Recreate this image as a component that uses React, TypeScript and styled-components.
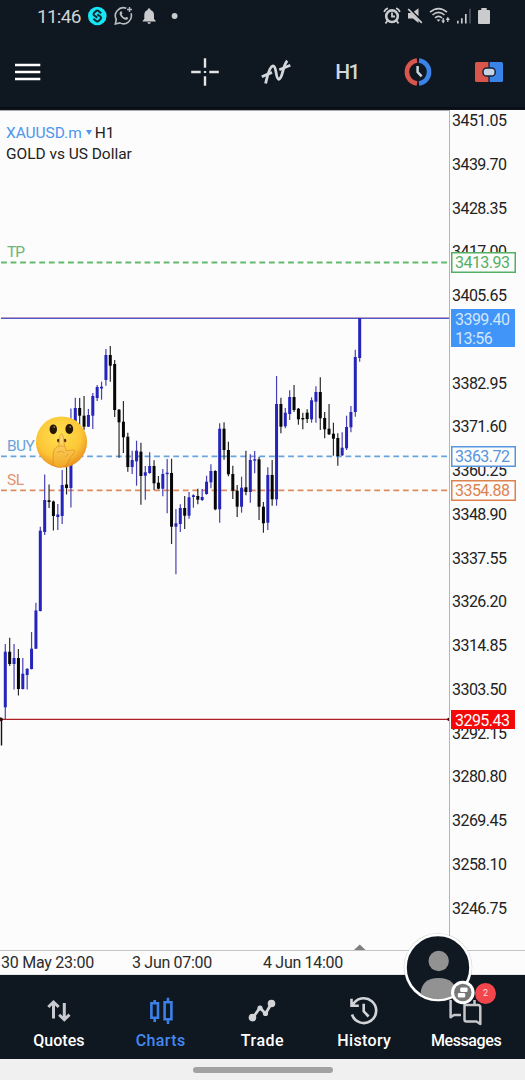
import React from "react";
import styled, { createGlobalStyle } from "styled-components";

const GlobalStyle = createGlobalStyle`
  * { box-sizing: border-box; }
  body { margin: 0; background: #0f1720; font-family: Roboto, sans-serif; }
`;

const Screen = styled.div`
  width: 525px;
  height: 1080px;
  display: flex;
  flex-direction: column;
  overflow: hidden;
  background: #0f1720;
`;

const StatusBar = styled.div`
  height: 34px;
  display: flex;
  justify-content: space-between;
  padding: 0 35px 0 37px;
`;

const StatusGroup = styled.div<{ $gap: number }>`
  display: flex;
  align-items: center;
  gap: ${(p) => p.$gap}px;
  height: 32px;
  svg { display: block; }
`;

const Time = styled.span`
  width: 44px;
  color: #d0d2d4;
  font-size: 19px;
  letter-spacing: -0.75px;
  white-space: nowrap;
`;

const Toolbar = styled.div`
  height: 76px;
  display: flex;
  align-items: center;
  border-bottom: 1px solid #0f1720;
  box-shadow: inset 0 -2px 0 #0a0f16;
`;

const MenuButton = styled.div`
  flex: 1;
  padding-left: 15px;
  svg { display: block; }
`;

const Tool = styled.div`
  width: 71px;
  height: 75px;
  display: flex;
  align-items: center;
  justify-content: center;
  padding-right: 1px;
  color: #d3d6da;
  font-size: 21px;
  font-weight: 500;
  letter-spacing: -1.6px;
`;

const ChartPanel = styled.div`
  position: relative;
  height: 865px;
  display: flex;
  flex-direction: column;
  background: #fcfcfc;
`;

const ChartBody = styled.div`
  height: 840px;
  display: flex;
`;

const Plot = styled.div`
  position: relative;
  width: 449px;
  > svg { display: block; }
`;

const PlotText = styled.div<{ $x: number; $y: number; $color: string; $size?: number; $spacing?: number }>`
  position: absolute;
  left: ${(p) => p.$x}px;
  top: ${(p) => p.$y}px;
  color: ${(p) => p.$color};
  font-size: ${(p) => p.$size ?? 15.5}px;
  letter-spacing: ${(p) => p.$spacing ?? 0}px;
  line-height: 20px;
  white-space: nowrap;
  span { color: #222; }
  svg { margin: 0 3px 3px 4px; }
`;

const PriceAxis = styled.div`
  position: relative;
  width: 76px;
  height: 840px;
  overflow: hidden;
  border-left: 1px solid #b5b5b5;
`;

const PriceList = styled.div`
  margin-top: -11px;
  display: flex;
  flex-direction: column;
`;

const Price = styled.div`
  height: 43.77px;
  line-height: 44px;
  padding-left: 2px;
  font-size: 16px;
  letter-spacing: -0.54px;
  color: #222;
`;

const PriceTag = styled.div<{ $top: number; $color: string; $fill?: string; $h?: number; $w?: number }>`
  position: absolute;
  left: 1px;
  top: ${(p) => p.$top}px;
  width: ${(p) => p.$w ?? 65}px;
  height: ${(p) => p.$h ?? 21}px;
  padding-left: 3px;
  border: 1.5px solid ${(p) => p.$fill ?? p.$color};
  background: ${(p) => p.$fill ?? "#fcfcfc"};
  color: ${(p) => p.$color};
  font-size: 16px;
  letter-spacing: -0.54px;
  line-height: 19px;
  box-shadow: inset 0 0 0 0.5px ${(p) => p.$fill ?? p.$color};
`;

const DateAxis = styled.div`
  height: 25px;
  display: flex;
  border-top: 1px solid #c4c4c4;
  border-bottom: 1px solid #e4e4e4;
  padding-left: 1px;
  line-height: 23px;
  font-size: 16px;
  color: #2b2b2b;
`;

const DateLabel = styled.span<{ $spacing: number }>`
  width: 131px;
  letter-spacing: ${(p) => p.$spacing}px;
  white-space: nowrap;
`;

const NavBar = styled.nav`
  position: relative;
  height: 84px;
  display: flex;
  padding: 0 8px;
`;

const NavItem = styled.div<{ $active?: boolean; $spacing?: number }>`
  flex: 1;
  display: flex;
  flex-direction: column;
  align-items: center;
  padding-top: 20px;
  color: ${(p) => (p.$active ? "#4289f0" : "#fff")};
  font-size: 16px;
  font-weight: 500;
  letter-spacing: ${(p) => p.$spacing ?? 0}px;
  line-height: 20px;
  svg { display: block; height: 32px; width: 40px; margin-bottom: 4px; }
`;

const Avatar = styled.div`
  position: absolute;
  left: 402px;
  top: -44px;
  svg { display: block; }
`;

const Badge = styled.div`
  position: absolute;
  left: 475px;
  top: 8px;
  width: 21px;
  height: 21px;
  border-radius: 50%;
  background: #f2464c;
  color: #ffdcdc;
  font-size: 9px;
  line-height: 21px;
  text-align: center;
`;

const HomeBar = styled.div`
  height: 21px;
  background: #f0f0f0;
  display: flex;
  justify-content: center;
  padding-top: 7.5px;
`;

const HomePill = styled.div`
  width: 140px;
  height: 6px;
  border-radius: 3px;
  background: #a2a2a2;
`;

const CHART_TOP = 110;
const STEP = 4.375;

// direction, high, body top, body bottom, low
type Candle = ["u" | "d", number, number, number, number];

const candles: Candle[] = [
  ["u", 644, 651.7, 707.3, 719], ["d", 637.7, 651.7, 664, 666], ["u", 644, 658, 664, 689.5],
  ["d", 649, 658, 689, 695.5], ["u", 658, 673.7, 689, 689.5], ["u", 668.5, 668.7, 675, 689.5],
  ["u", 632, 648.7, 669, 669.5], ["u", 602.7, 610.5, 648.7, 649], ["u", 526.7, 530.7, 611, 611.5],
  ["u", 474.5, 500, 532, 535], ["d", 484.5, 500.3, 502, 508], ["d", 500.5, 501.5, 516, 530.5],
  ["u", 504, 514.5, 517, 530], ["u", 470, 485, 516, 524], ["d", 455, 484.5, 488, 494.5],
  ["u", 408.5, 425, 488, 507.5], ["u", 397.7, 408, 430, 430], ["d", 398, 408, 415.7, 425],
  ["d", 396, 415.7, 426.7, 430], ["u", 409, 415, 426.7, 427], ["u", 393, 396, 415.7, 429],
  ["u", 385, 387, 398, 401], ["u", 381.7, 386.7, 388.5, 399.7], ["u", 349, 355, 380, 385.7],
  ["d", 346, 355, 365.7, 381.7], ["d", 360, 364, 410, 417], ["d", 409, 409.7, 422.3, 457.7],
  ["d", 401, 421.7, 437.3, 453], ["d", 432.7, 436.7, 467, 471.7], ["u", 450.7, 460, 467, 474],
  ["u", 440.7, 450.7, 461.3, 485.7], ["d", 442.7, 451.7, 476, 504.7], ["u", 466, 472.3, 475.7, 499.7],
  ["u", 452.3, 466, 473, 473.7], ["d", 460.3, 466, 483.3, 490], ["d", 476, 482.7, 488.7, 489.3],
  ["u", 469, 474, 488.7, 496.3], ["u", 459, 472.7, 474, 513.3], ["d", 458.7, 473, 526.7, 544],
  ["u", 509, 523.3, 526.7, 574.3], ["u", 504.3, 508, 524, 532], ["d", 496, 508, 515.7, 529],
  ["u", 492, 497.3, 515.7, 518.7], ["u", 494.3, 495.3, 497, 507.7], ["d", 488.7, 496, 499.7, 504.3],
  ["u", 489, 497, 500, 501], ["u", 475.7, 481.7, 494, 494.7], ["u", 464.3, 471, 482.3, 488.3],
  ["d", 470.3, 471, 509.3, 510.3], ["u", 423.3, 428.7, 509.3, 522.7], ["d", 422.3, 428.7, 450, 459.7],
  ["d", 441.7, 450, 474.3, 476.3], ["d", 465.7, 474, 490.7, 499], ["d", 485, 490.7, 506.7, 517],
  ["u", 476.7, 487.7, 506.7, 512.7], ["d", 450.7, 487.3, 492, 495.3], ["u", 454.3, 460, 492, 502.7],
  ["u", 451, 459.3, 460.7, 473.3], ["d", 456.7, 459.3, 506.7, 520], ["d", 502, 506.7, 523.3, 532.7],
  ["u", 467.3, 475, 522.7, 530], ["d", 460, 475, 499.3, 505.7], ["u", 376, 404, 499.3, 505.7],
  ["d", 397.7, 404, 426.7, 433.3], ["u", 408, 412.7, 426.3, 428.3], ["u", 390.3, 397, 414, 420],
  ["d", 385, 397, 410, 412], ["d", 408, 408.7, 419.3, 424.7], ["d", 412.7, 418, 419.3, 429.3],
  ["d", 409.3, 412.7, 419, 423], ["u", 397.3, 400.3, 419.3, 422.7], ["u", 386.3, 392, 401.7, 422.7],
  ["d", 377.3, 392, 418.3, 430], ["d", 412, 418, 429.3, 438.3], ["d", 404, 428.7, 434.3, 435],
  ["d", 422.7, 433.7, 438.7, 455.7], ["d", 433.3, 438, 456, 465.7], ["u", 432.3, 447.7, 455.3, 456],
  ["u", 415.7, 427, 448.3, 450], ["u", 406, 412, 427.3, 432.3], ["u", 349.7, 357, 412, 416.7],
  ["u", 318.3, 318.3, 358, 361.7],
];

const prices = [
  "3451.05", "3439.70", "3428.35", "3417.00", "3405.65", "", "3382.95", "3371.60", "3360.25", "3348.90",
  "3337.55", "3326.20", "3314.85", "3303.50", "3292.15", "3280.80", "3269.45", "3258.10", "3246.75",
];

const Level = ({ y, color }: { y: number; color: string }) => (
  <line x1="1" x2="449" y1={y} y2={y} stroke={color} strokeWidth="1.8" strokeDasharray="5.8 3.77" />
);

const ShushFace = () => (
  <g>
    <defs>
      <radialGradient id="face" cx="0.45" cy="0.35" r="0.68">
        <stop offset="0" stopColor="#ffe04f" />
        <stop offset="0.65" stopColor="#fcc636" />
        <stop offset="1" stopColor="#e8891d" />
      </radialGradient>
      <linearGradient id="hand" x1="0" y1="0" x2="0" y2="1">
        <stop offset="0" stopColor="#ffe07a" />
        <stop offset="1" stopColor="#f1aa25" />
      </linearGradient>
    </defs>
    <circle cx="61.5" cy="442" r="25.6" fill="url(#face)" />
    <ellipse cx="53.3" cy="429.3" rx="3.7" ry="4.9" fill="#261807" />
    <ellipse cx="69.3" cy="429" rx="3.9" ry="4.9" fill="#261807" />
    <circle cx="54.2" cy="427" r="1" fill="#8d6b45" />
    <circle cx="70.2" cy="427" r="1" fill="#8d6b45" />
    <ellipse cx="58.3" cy="440.6" rx="1.3" ry="1.8" fill="#5d2c0b" />
    <ellipse cx="65" cy="440.6" rx="1.3" ry="1.8" fill="#5d2c0b" />
    <path
      d="M60 436 Q61.5 431.5 63 436 L64.5 446 L66.5 451 L73 449.8 Q76 450.3 74 453 L70.5 457 L67 463.5 Q62 469 55.5 466.5 Q52.5 464 53.2 454 Q53.5 448 58.8 446 Z"
      fill="url(#hand)" stroke="#dc8c20" strokeWidth="0.7"
    />
    <path d="M59 447 Q61 445 64 446.5 M57 452.5 Q61 450 64.5 452.5 M65 457 L69 453.5" fill="none" stroke="#dd9628" strokeWidth="0.7" />
  </g>
);

const ChartDrawing = () => (
  <svg width="449" height="840" viewBox={`0 ${CHART_TOP} 449 840`}>
    <line x1="0" x2="449" y1="110.5" y2="110.5" stroke="#a9a9ad" />
    <Level y={262.5} color="#62b96c" />
    <Level y={456.3} color="#67a3dd" />
    <Level y={490.3} color="#de8a5c" />
    <line x1="1" x2="449" y1="317.7" y2="317.7" stroke="#d5a3b8" strokeWidth="1" />
    <line x1="1" x2="449" y1="318.4" y2="318.4" stroke="#4f58c4" strokeWidth="1.2" />
    {candles.map(([dir, high, top, bottom, low], i) => {
      const x = 5.3 + i * STEP;
      const up = dir === "u";
      return (
        <g key={i}>
          <line x1={x} x2={x} y1={high} y2={low} stroke={up ? "#4840b4" : "#2c2c2c"} strokeWidth="1.2" />
          <rect x={x - 1.5} y={top} width="3" height={Math.max(bottom - top, 1.4)} fill={up ? "#2524bb" : "#060606"} />
        </g>
      );
    })}
    <line x1="1.5" x2="1.5" y1="719" y2="745.5" stroke="#111" strokeWidth="1.4" />
    <line x1="0" x2="449" y1="719.4" y2="719.4" stroke="#ad2026" strokeWidth="1.3" />
    <circle cx="1" cy="719.3" r="1.9" fill="#3b0808" />
    <circle cx="448.8" cy="719.3" r="1.6" fill="#3b0808" />
    <path d="M354 950 L359.8 944.5 L365.5 950 Z" fill="#7e7e7e" />
    <ShushFace />
  </svg>
);

const StatusIcons = () => (
  <>
    <StatusGroup $gap={7}>
      <Time>11:46</Time>
      <svg width="19" height="20" viewBox="0 0 19 20">
        <circle cx="9.3" cy="10" r="9.3" fill="#17e6f4" />
        <path d="M13.2 7.2 L10 4.6 Q9.2 4.2 8.4 4.8 L6 7 Q5 8.4 6.3 9.5 L9.3 11.6 M5.4 12.8 L8.6 15.4 Q9.4 15.8 10.2 15.2 L12.6 13 Q13.6 11.6 12.3 10.5 L9.3 8.4" fill="none" stroke="#102b36" strokeWidth="2" />
      </svg>
      <svg width="19" height="20" viewBox="0 0 19 20">
        <path d="M12.3 2.3 A8 8 0 0 0 2.3 13.5 L1.3 18 L5.8 16.9 A8 8 0 0 0 17 7.3" fill="none" stroke="#b9bdc0" strokeWidth="1.6" />
        <path d="M6.2 5.8 Q7.6 4.5 8.3 6.8 Q8.5 8 7.6 8.5 Q8.9 11 11.2 11.8 Q12.1 10.4 13.3 11.2 Q15 12 13.8 13 Q11.5 15.1 8.2 12.1 Q4.3 8.2 6.2 5.8Z" fill="#b9bdc0" />
        <path d="M15.5 1 V6 M13 3.5 H18" stroke="#b9bdc0" strokeWidth="1.4" />
      </svg>
      <svg width="19" height="20" viewBox="0 0 19 20">
        <path d="M9 2.3 Q10.5 2.3 10.5 4 Q14 5.2 14 9 V13 L15.7 14.7 V15.5 H2.7 V14.7 L4.3 13 V9 Q4.3 5.2 7.6 4 Q7.6 2.3 9 2.3Z M7.3 16.2 H11 Q10.6 18 9.1 18 Q7.7 18 7.3 16.2Z" fill="#c9cbcd" />
      </svg>
      <svg width="19" height="20" viewBox="0 0 19 20"><circle cx="8.6" cy="10" r="2.9" fill="#c9cbcd" /></svg>
    </StatusGroup>
    <StatusGroup $gap={6}>
      <svg width="18" height="18" viewBox="0 0 18 18" fill="none" stroke="#c9cbcd">
        <circle cx="9" cy="9.2" r="5.8" strokeWidth="2.6" />
        <path d="M1.2 5 Q2 2 5 1.2 M13 1.2 Q16 2 16.8 5" strokeWidth="1.7" />
        <path d="M9 5.5 V9.5 H12 M4.5 13.5 L2.5 16.5 M13.5 13.5 L15.5 16.5" strokeWidth="1.8" />
      </svg>
      <svg width="16" height="18" viewBox="0 0 16 18">
        <path d="M1 6 H4.5 L11.5 13 V16 L6 11.5 H1Z M6.8 4.8 L11.5 1.3 V9.2Z" fill="#c9cbcd" />
        <path d="M1.2 2 L14.8 15.8" stroke="#c9cbcd" strokeWidth="1.7" />
      </svg>
      <svg width="22" height="18" viewBox="0 0 22 18" fill="none" stroke="#c9cbcd" strokeWidth="1.6">
        <path d="M1 5.2 Q9.5 -2 18 5.2 M3.5 8 Q9.5 2.8 15.5 8 M6 10.8 Q9.5 7.8 13 10.8" />
        <path d="M7.5 12.4 L9.5 14.8 L11.5 12.4Z" fill="#c9cbcd" stroke="none" />
        <path d="M12.2 13.5 H16.2 L14.2 16.6Z M16.7 13 H21 L18.8 9.8Z" fill="#c9cbcd" stroke="none" />
        <path d="M14.2 11 V14 M18.8 12 V15" strokeWidth="1.3" />
      </svg>
      <svg width="15" height="18" viewBox="0 0 15 18">
        <path d="M0.8 13.8 V16.5 M4.8 11.3 V16.5 M8.8 7 V16.5" stroke="#c9cbcd" strokeWidth="1.7" />
        <path d="M13 1.7 V16.5" stroke="#50575f" strokeWidth="1.5" />
      </svg>
      <svg width="12" height="18" viewBox="0 0 12 18">
        <path d="M3.3 1 H8.7 V3 H11 Q12 3 12 4 V16 Q12 17 11 17 H1 Q0 17 0 16 V4 Q0 3 1 3 H3.3Z" fill="#c9cbcd" />
      </svg>
    </StatusGroup>
  </>
);

const App = () => (
  <Screen>
    <GlobalStyle />
    <StatusBar><StatusIcons /></StatusBar>
    <Toolbar>
      <MenuButton>
        <svg width="26" height="20" viewBox="0 0 26 20">
          <path d="M0 3 H25.3 M0 10 H25.3 M0 17 H25.3" stroke="#fff" strokeWidth="2.7" />
        </svg>
      </MenuButton>
      <Tool>
        <svg width="28" height="28" viewBox="0 0 28 28" stroke="#e2e3e5" strokeWidth="2.4">
          <path d="M14 0.2 V9.7 M14 18.3 V27.8 M0.2 14 H9.7 M18.3 14 H27.8" />
          <path d="M12.9 14 H15.1" strokeWidth="2" />
        </svg>
      </Tool>
      <Tool>
        <svg width="30" height="26" viewBox="0 0 30 26" fill="none" stroke="#d3d6da" strokeWidth="2.8">
          <path d="M0.8 17.8 L11 13.4 M18.3 10.8 L29.3 6.3" />
          <path d="M4.6 24.5 C6 18.5 8.2 7.3 12 6.8 C16 6.7 14.2 19.8 17.8 20.3 C21.8 20 21.5 6.5 26.3 1.8" />
        </svg>
      </Tool>
      <Tool>H1</Tool>
      <Tool>
        <svg width="28" height="28" viewBox="0 0 28 28" fill="none">
          <path d="M13 2.5 A11.6 11.6 0 0 0 13 25.5" stroke="#d9564d" strokeWidth="4.6" />
          <path d="M15 2.5 A11.6 11.6 0 0 1 15 25.5" stroke="#3983e9" strokeWidth="4.6" />
          <path d="M13.6 8 V14 L17.6 18.3" stroke="#ccd5df" strokeWidth="2.5" />
        </svg>
      </Tool>
      <Tool>
        <svg width="28" height="22" viewBox="0 0 28 22">
          <path d="M1.5 1 H13.4 V21 H1.5 Q0 21 0 19.5 V2.5 Q0 1 1.5 1Z" fill="#d9564d" />
          <path d="M14.6 1 H26.5 Q28 1 28 2.5 V19.5 Q28 21 26.5 21 H14.6Z" fill="#3983e9" />
          <rect x="8" y="7" width="12.2" height="8" rx="3.6" fill="#c5d3e4" stroke="#132336" strokeWidth="1.5" />
        </svg>
      </Tool>
    </Toolbar>

    <ChartPanel>
      <ChartBody>
        <Plot>
          <ChartDrawing />
          <PlotText $x={6} $y={13} $color="#4c96ef" $spacing={-0.05}>
            XAUUSD.m
            <svg width="6" height="5" viewBox="0 0 6 5"><path d="M0 0 H6 L3 5Z" fill="#4c96ef" /></svg>
            <span>H1</span>
          </PlotText>
          <PlotText $x={6} $y={34} $color="#222" $spacing={-0.03}>GOLD vs US Dollar</PlotText>
          <PlotText $x={7} $y={132} $color="#6bb576" $spacing={-0.9}>TP</PlotText>
          <PlotText $x={7} $y={326} $color="#6ba3d8" $spacing={-0.6}>BUY</PlotText>
          <PlotText $x={7} $y={360} $color="#df9470" $spacing={-0.5}>SL</PlotText>
        </Plot>
        <PriceAxis>
          <PriceList>
            {prices.map((price, i) => <Price key={i}>{price}</Price>)}
          </PriceList>
          <PriceTag $top={142} $color="#55af63">3413.93</PriceTag>
          <PriceTag $top={199} $h={38} $w={64} $color="#d2e6fc" $fill="#4195f8">3399.40<br />13:56</PriceTag>
          <PriceTag $top={336} $color="#5795dd">3363.72</PriceTag>
          <PriceTag $top={370} $color="#dd814f">3354.88</PriceTag>
          <PriceTag $top={600} $h={19} $w={64} $color="#fff" $fill="#f40909">3295.43</PriceTag>
        </PriceAxis>
      </ChartBody>
      <DateAxis>
        <DateLabel $spacing={-0.25}>30 May 23:00</DateLabel>
        <DateLabel $spacing={-0.3}>3 Jun 07:00</DateLabel>
        <DateLabel $spacing={-0.3}>4 Jun 14:00</DateLabel>
      </DateAxis>
    </ChartPanel>

    <NavBar>
      <NavItem>
        <svg viewBox="0 0 40 32" fill="none" stroke="#c8cacf" strokeWidth="3">
          <path d="M14.5 23.5 V7.5 M9.3 12 L14.5 7 L19.7 12 M25.3 8 V24 M20.2 19.7 L25.3 24.7 L30.5 19.7" />
        </svg>
        Quotes
      </NavItem>
      <NavItem $active $spacing={0.4}>
        <svg viewBox="0 0 40 32" fill="none" stroke="#3b80e7" strokeWidth="2.6">
          <path d="M10.4 8.3 H17 V22.7 H10.4Z M23.6 7.2 H30.4 V24.3 H23.6Z M13.7 5 V8 M13.7 23 V27 M27 2.8 V7 M27 24.5 V29" />
        </svg>
        Charts
      </NavItem>
      <NavItem $spacing={0.5}>
        <svg viewBox="0 0 40 32" fill="none" stroke="#d2d4d8">
          <path d="M11 22.5 L18 12.7 L23.5 18.7 L29.3 8.7" strokeWidth="2.8" />
          <g fill="#d2d4d8" stroke="none">
            <circle cx="10.5" cy="22.6" r="3.8" /><circle cx="18" cy="13" r="2.6" />
            <circle cx="23.5" cy="18.5" r="2.6" /><circle cx="29.5" cy="8.5" r="3.8" />
          </g>
        </svg>
        Trade
      </NavItem>
      <NavItem $spacing={0.35}>
        <svg viewBox="0 0 40 32" fill="none" stroke="#d2d4d8" strokeWidth="2.6">
          <path d="M8.5 10.5 A12.4 12.4 0 1 1 8 19.5 M7.5 3.8 V10.7 H14.8 M19.7 8.7 V16.3 L24.6 21.5" />
        </svg>
        History
      </NavItem>
      <NavItem $spacing={-0.4}>
        <svg viewBox="0 0 40 32" fill="none" stroke="#c5c7cb" strokeWidth="2.5" strokeLinejoin="round">
          <path d="M4.6 5 V22.3 L8 20 H15 M28.5 5 V9" />
          <path d="M18.5 10 H31.8 Q34.3 10 34.3 12.5 V29 L30.5 26.5 H20.5 Q18.5 26.5 18.5 24.5Z" fill="#0f1720" />
        </svg>
        Messages
      </NavItem>
      <Avatar>
        <svg width="76" height="74" viewBox="402 931 76 74">
          <defs><clipPath id="avatar-clip"><circle cx="438" cy="967.5" r="31.7" /></clipPath></defs>
          <circle cx="438" cy="967.5" r="34.3" fill="#6c7780" opacity="0.35" />
          <circle cx="438" cy="967.5" r="32.5" fill="#101922" stroke="#fff" strokeWidth="2.6" />
          <g clipPath="url(#avatar-clip)" fill="#929292">
            <circle cx="438.7" cy="961" r="10.2" />
            <path d="M420.5 1002 V994 Q421.5 978 438.5 978 Q455.5 978 456.5 994 V1002Z" />
          </g>
          <circle cx="462.8" cy="992.5" r="11.8" fill="#fff" />
          <circle cx="462.8" cy="992.5" r="8.7" fill="#777" />
          <rect x="460.2" y="987.5" width="7.4" height="4.6" rx="1.3" fill="#fff" />
          <rect x="457.8" y="993" width="7.4" height="4.6" rx="1.3" fill="#fff" />
        </svg>
      </Avatar>
      <Badge>2</Badge>
    </NavBar>
    <HomeBar><HomePill /></HomeBar>
  </Screen>
);

export default App;
